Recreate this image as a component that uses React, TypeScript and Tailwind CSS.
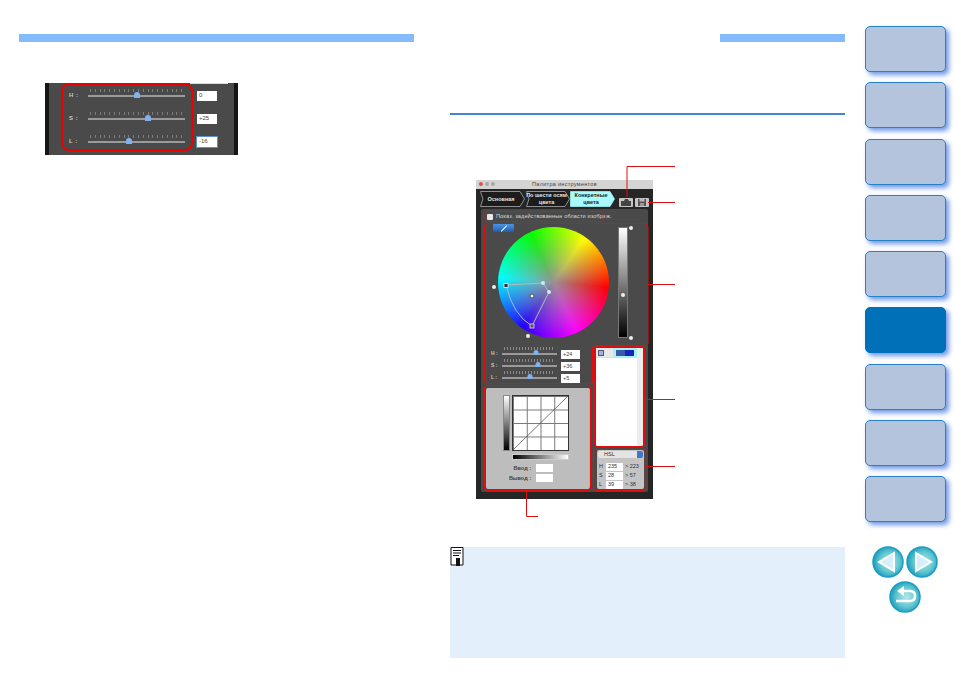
const tileKeys = [0, 1, 2, 3, 4, 5, 6, 7, 8];

function Slider({ pos, thumb = 6, pitch }: { pos: number; thumb?: number; pitch: "wide" | "narrow" }) {
  return (
    <div className="relative h-[2px] w-full bg-[#9a9a9a]">
      <div
        className={`absolute left-[2px] right-[2px] -top-[6px] h-[3px] ${
          pitch === "wide"
            ? "bg-[repeating-linear-gradient(90deg,#7c7c7c_0,#7c7c7c_1px,transparent_1px,transparent_4.8px)]"
            : "bg-[repeating-linear-gradient(90deg,#8a8a8a_0,#8a8a8a_1px,transparent_1px,transparent_3px)]"
        }`}
      />
      <div
        className="absolute -top-[3px] -translate-x-1/2 rounded-t-[3px] bg-[#7fb2ee]"
        style={{ left: `${pos}%`, width: thumb, height: thumb }}
      />
    </div>
  );
}

function PhotoRow({ label, pos, value, focused }: { label: string; pos: number; value: string; focused?: boolean }) {
  return (
    <div className="flex h-[23px] items-center">
      <span className="w-[19px] text-[6px] font-bold tracking-[0.5px] text-[#c8c8c8]">{label}</span>
      <div className="w-[97px]">
        <Slider pos={pos} pitch="wide" />
      </div>
      <div className={`ml-[12px] flex h-[10px] w-[20px] items-center bg-white pl-[2px] text-[6px] text-[#444] ${focused ? "outline outline-[1px] outline-[#5b8fd0]" : ""}`}>
        {value}
      </div>
    </div>
  );
}

function SmallRow({ label, pos, value }: { label: string; pos: number; value: string }) {
  return (
    <div className="flex h-[12px] items-center pl-[10px]">
      <span className="w-[11px] text-[5px] font-bold text-[#c8c8c8]">{label}</span>
      <div className="w-[55px]">
        <Slider pos={pos} thumb={5} pitch="narrow" />
      </div>
      <div className="ml-[4px] flex h-[9px] w-[19px] items-center bg-white pl-[2px] text-[5.5px] text-[#444]">{value}</div>
    </div>
  );
}

function Tab({ w, active, children }: { w: number; active?: boolean; children: React.ReactNode }) {
  return (
    <div className="relative flex h-[16px] items-center justify-center" style={{ width: w }}>
      <svg className="absolute inset-0" width={w} height={16} viewBox={`0 0 ${w} 16`}>
        <polygon
          points={`0.5,0.5 ${w - 5},0.5 ${w - 0.5},8 ${w - 5},15.5 0.5,15.5 ${active ? 0.5 : 3},8`}
          fill={active ? "#a8fbfb" : "#1c1c1c"}
          stroke={active ? "#a8fbfb" : "#bdbdbd"}
          strokeWidth={0.7}
        />
      </svg>
      <span className={`relative pr-[3px] text-center text-[5.5px] font-bold leading-[7px] ${active ? "text-[#222]" : "text-[#e4e4e4]"}`}>
        {children}
      </span>
    </div>
  );
}

function HslRow({ label, value, out }: { label: string; value: string; out: string }) {
  return (
    <div className="flex h-[9px] items-center text-[5.5px] text-[#333]">
      <span className="w-[8px] pl-[1px]">{label}</span>
      <div className="flex h-[8px] w-[17px] items-center bg-white pl-[2px]">{value}</div>
      <span className="ml-[2px]">{out}</span>
    </div>
  );
}

function Palette() {
  return (
    <div className="flex h-[319px] w-[177px] flex-col bg-[#262626] font-['Liberation_Sans',sans-serif]">
      {/* title bar */}
      <div className="relative flex h-[9px] items-center justify-center bg-[#d4d4d4] text-[5.5px] tracking-[0.3px] text-[#444]">
        <div className="absolute left-[3px] top-[2px] flex gap-[2px]">
          <span className="h-[4px] w-[4px] rounded-full bg-[#d9534f]" />
          <span className="h-[4px] w-[4px] rounded-full bg-[#a8a8a8]" />
          <span className="h-[4px] w-[4px] rounded-full bg-[#a8a8a8]" />
        </div>
        Палитра инструментов
      </div>

      {/* tabs */}
      <div className="mt-[2px] flex pl-[4px]">
        <Tab w={45}>Основная</Tab>
        <div className="w-[1px]" />
        <Tab w={44}>По шести осям цвета</Tab>
        <Tab w={45} active>Конкретные цвета</Tab>
        <div className="ml-[4px] mt-[7px] flex h-[9px] w-[14px] items-center justify-center rounded-[1px] bg-[#c4c4c4]">
          <svg width={10} height={7} viewBox="0 0 10 7">
            <path d="M0 2 H3 L4 0 H7 L8 2 H10 V7 H0 Z" fill="#444" />
          </svg>
        </div>
        <div className="ml-[2px] mt-[7px] flex h-[9px] w-[14px] items-center justify-center rounded-[1px] bg-[#c4c4c4]">
          <svg width={8} height={7} viewBox="0 0 8 7">
            <path d="M0 0 H8 V7 H0 Z" fill="#555" />
            <rect x={1.5} y={0} width={5} height={2.5} fill="#bbb" />
            <rect x={2} y={4} width={4} height={3} fill="#999" />
          </svg>
        </div>
      </div>

      {/* main panel */}
      <div className="ml-[5px] mt-[2px] h-[283px] w-[167px] rounded-[2px] bg-[#4a4a4a] pt-[3px]">
        <div className="flex h-[9px] items-center pl-[6px]">
          <div className="h-[6px] w-[6px] rounded-[1px] bg-[#e8e8e8]" />
          <span className="ml-[3px] whitespace-nowrap text-[5.5px] tracking-[0.15px] text-[#d8d8d8]">
            Показ. задействованные области изображ.
          </span>
        </div>

        {/* wheel and brightness bar */}
        <div className="relative mt-[4px] flex h-[123px] pl-[17px]">
          <div className="relative mt-[2px] h-[111px] w-[111px] rounded-full bg-[conic-gradient(from_35deg,#ffff00,#ff0000_60deg,#ff00ff_120deg,#2200ff_180deg,#00ffff_240deg,#00ff00_300deg,#ffff00_360deg)]">
            <div className="absolute inset-0 rounded-full bg-[radial-gradient(circle,#9a8f95_0%,rgba(150,150,150,0.6)_25%,rgba(150,150,150,0)_68%)]" />
          </div>
          <div className="ml-[9px] mt-[2px] h-[111px] w-[10px] border border-[#777] bg-[linear-gradient(180deg,#ffffff,#808080_50%,#000000)]" />
          <div className="absolute left-[12px] top-[-1px] flex h-[8px] w-[21px] items-center justify-center rounded-[1px] bg-[linear-gradient(180deg,#4f94e8,#1f5cb0)]">
            <div className="h-[1px] w-[8px] -rotate-45 bg-white" />
          </div>
          <svg className="absolute left-0 top-0" width={167} height={123} viewBox="0 0 167 123">
            <path d="M25 60 L62 58 L68 67 L51 101 Q32 90 25 60 Z" fill="none" stroke="#b8b8b8" strokeWidth={1} />
            <rect x={23} y={58.5} width={4} height={4} fill="#333" stroke="#eee" strokeWidth={0.8} />
            <circle cx={62} cy={58} r={2} fill="#c0f0f0" />
            <circle cx={68} cy={67} r={2} fill="#c0f0f0" />
            <rect x={49} y={99} width={4} height={4} fill="#555" stroke="#ddd" strokeWidth={0.8} />
            <circle cx={51} cy={71} r={2} fill="#fff" stroke="#333" strokeWidth={0.8} />
            <circle cx={13} cy={62} r={2} fill="#eee" />
            <circle cx={47} cy={111} r={2} fill="#eee" />
            <circle cx={150} cy={3} r={2} fill="#eee" />
            <circle cx={142} cy={70} r={2} fill="#eee" />
            <circle cx={150} cy={113} r={2} fill="#eee" />
          </svg>
        </div>

        {/* lower part */}
        <div className="flex">
          <div className="w-[112px]">
            <SmallRow label="H :" pos={62} value="+24" />
            <SmallRow label="S :" pos={65} value="+36" />
            <SmallRow label="L :" pos={51} value="+5" />

            <div className="ml-[5px] mt-[4px] h-[101px] w-[104px] rounded-[2px] bg-[#bdbdbd] pt-[7px]">
              <div className="flex pl-[17px]">
                <div className="h-[56px] w-[7px] border border-[#888] bg-[linear-gradient(180deg,#ffffff,#000000)]" />
                <div className="relative ml-[2px] h-[56px] w-[57px] border border-[#333] bg-white bg-[linear-gradient(#777_1px,transparent_1px),linear-gradient(90deg,#777_1px,transparent_1px)] bg-[size:13.75px_13.5px]">
                  <svg className="absolute inset-0" width={55} height={54} viewBox="0 0 55 54">
                    <line x1={0} y1={54} x2={55} y2={0} stroke="#555" strokeWidth={0.8} />
                  </svg>
                </div>
              </div>
              <div className="ml-[26px] mt-[3px] h-[6px] w-[57px] border border-[#ccc] bg-[linear-gradient(90deg,#000000,#ffffff)]" />
              <div className="mt-[4px] flex h-[8px] items-center">
                <span className="w-[45px] text-right text-[5.5px] font-bold text-[#444]">Ввод :</span>
                <div className="ml-[5px] h-[8px] w-[17px] bg-white" />
              </div>
              <div className="mt-[2px] flex h-[8px] items-center">
                <span className="w-[45px] text-right text-[5.5px] font-bold text-[#444]">Вывод :</span>
                <div className="ml-[5px] h-[8px] w-[17px] bg-white" />
              </div>
            </div>
          </div>

          <div className="ml-[3px] w-[48px]">
            <div className="flex h-[98px] w-[47px] bg-white">
              <div className="flex h-[10px] w-[41px] items-center border-b border-[#ddd] bg-[#e8e8e8] pl-[2px]">
                <div className="h-[6px] w-[6px] border border-[#557] bg-[#9db4e0]" />
                <div className="ml-[9px] flex h-[9px] w-[24px] items-center justify-center bg-[#a4f4f4]">
                  <div className="h-[6px] w-[9px] bg-[#3a5aa8]" />
                  <div className="h-[6px] w-[9px] bg-[#1a22c0]" />
                </div>
              </div>
              <div className="h-full w-[6px] bg-[#ececec]" />
            </div>
            <div className="ml-[1px] mt-[4px] h-[39px] w-[47px] rounded-[2px] bg-[#c4c4c4] px-[1px] pt-[1px]">
              <div className="flex h-[7px] items-center justify-between rounded-[2px] bg-[#e4e4e4] pl-[6px] text-[5.5px] text-[#333]">
                HSL
                <div className="h-[7px] w-[6px] rounded-r-[2px] bg-[#3c78d0]" />
              </div>
              <div className="mt-[4px]">
                <HslRow label="H" value="235" out="> 223" />
                <HslRow label="S" value="28" out="> 57" />
                <HslRow label="L" value="39" out="> 38" />
              </div>
            </div>
          </div>
        </div>
      </div>
    </div>
  );
}

function NavButton({ children }: { children: React.ReactNode }) {
  return (
    <svg width={32} height={32} viewBox="0 0 32 32">
      <defs>
        <radialGradient id="navFill" cx="55%" cy="50%" r="55%">
          <stop offset="0%" stopColor="#b4e8e8" />
          <stop offset="60%" stopColor="#62c8d0" />
          <stop offset="100%" stopColor="#1a9cbc" />
        </radialGradient>
      </defs>
      <circle cx={16} cy={16} r={15} fill="url(#navFill)" stroke="#1b9cc4" strokeWidth={1.5} />
      {children}
    </svg>
  );
}

export default function App() {
  return (
    <div className="relative flex h-[674px] w-[954px] overflow-hidden bg-white">
      {/* left page */}
      <div className="ml-[19px] w-[395px] pt-[34px]">
        <div className="h-[8px] bg-[#84bbff]" />
        <div className="relative ml-[26px] mt-[41px] flex h-[72px] w-[193px] border-x-[4px] border-x-[#151515] bg-[#4a4a4a] pl-[20px] pt-[1px] font-['Liberation_Sans',sans-serif]">
          <div className="absolute left-[141px] top-0 h-[1px] w-[38px] bg-[#dddddd]" />
          <div>
            <PhotoRow label="H :" pos={50} value="0" />
            <PhotoRow label="S :" pos={62} value="+25" />
            <PhotoRow label="L :" pos={42} value="-16" focused />
          </div>
        </div>
      </div>

      {/* right page */}
      <div className="ml-[36px] flex w-[395px] flex-col pt-[34px]">
        <div className="h-[8px] w-[125px] self-end bg-[#84bbff]" />
        <div className="mt-[71px] h-[2px] bg-[#3f87d0]" />
        <div className="ml-[26px] mt-[65px]">
          <Palette />
        </div>
        <div className="relative mt-[48px] h-[111px] bg-[#e3f0fc]">
          <svg className="absolute left-0 top-0" width={14} height={19} viewBox="0 0 14 19">
            <path d="M1 .5 H13 V18 H1 Z" fill="#fff" stroke="#111" />
            <path d="M3 3.5 H11 M3 6 H11 M3 8.5 H9" stroke="#111" />
            <rect x={6} y={11} width={4} height={8} fill="#111" />
          </svg>
        </div>
      </div>

      {/* navigation column */}
      <div className="ml-[20px] flex w-[81px] flex-col pt-[26px]">
        <div className="flex flex-col gap-[10.25px]">
          {tileKeys.map((i) => (
            <div
              key={i}
              className={`h-[46px] w-[81px] rounded-[5px] border-[1.5px] shadow-[3px_3px_5px_#6f98e4] ${
                i === 5 ? "border-[#0070b8] bg-[#0070b8]" : "border-[#2a80c4] bg-[#b4c4dc]"
              }`}
            />
          ))}
        </div>
        <div className="ml-[7px] mt-[24px] flex gap-[2px]">
          <NavButton>
            <path d="M22 7 L7 16 L22 25 Z" fill="#d8eef8" stroke="#fff" strokeWidth={2} />
          </NavButton>
          <NavButton>
            <path d="M10 7 L25 16 L10 25 Z" fill="#d8eef8" stroke="#fff" strokeWidth={2} />
          </NavButton>
        </div>
        <div className="ml-[24px] mt-[3px]">
          <NavButton>
            <path d="M14 10 H21 Q26 10 26 15 Q26 20 21 20 H7" fill="none" stroke="#fff" strokeWidth={2.5} />
            <path d="M15 5 L8 10 L15 15 Z" fill="#fff" />
          </NavButton>
        </div>
      </div>

      {/* red callouts */}
      <svg className="pointer-events-none absolute left-0 top-0" width={954} height={674} viewBox="0 0 954 674" fill="none">
        <g stroke="#e01010">
          <rect x={62} y={84} width={130} height={66} rx={7} strokeWidth={2} stroke="#ee0000" />
          <rect x={483.5} y={211.5} width={122} height={10} rx={5} strokeWidth={1} />
          <path d="M488 223.5 H644 Q648 223.5 648 227 V343 Q648 345.5 645 345.5 H596 Q592.5 345.5 592.5 348 V381 Q592.5 383.5 589 383.5 H488 Q484.5 383.5 484.5 380 V227 Q484.5 223.5 488 223.5 Z" strokeWidth={1} />
          <rect x={484.5} y={385.5} width={106} height={105} rx={3} strokeWidth={1.2} />
          <rect x={594.5} y={346.5} width={50} height={100} rx={3} strokeWidth={1.2} />
          <rect x={593.5} y={449.5} width={52} height={41} rx={3} strokeWidth={1.2} />
          <path d="M627 197 V166.5 H675" strokeWidth={1} />
          <path d="M648 202.5 H675" strokeWidth={1} />
          <path d="M648 284.5 H675" strokeWidth={1} />
          <path d="M644 399.5 H675" strokeWidth={1} />
          <path d="M646 466.5 H675" strokeWidth={1} />
          <path d="M526.5 491 V516.5 H538" strokeWidth={1} />
        </g>
      </svg>
    </div>
  );
}
